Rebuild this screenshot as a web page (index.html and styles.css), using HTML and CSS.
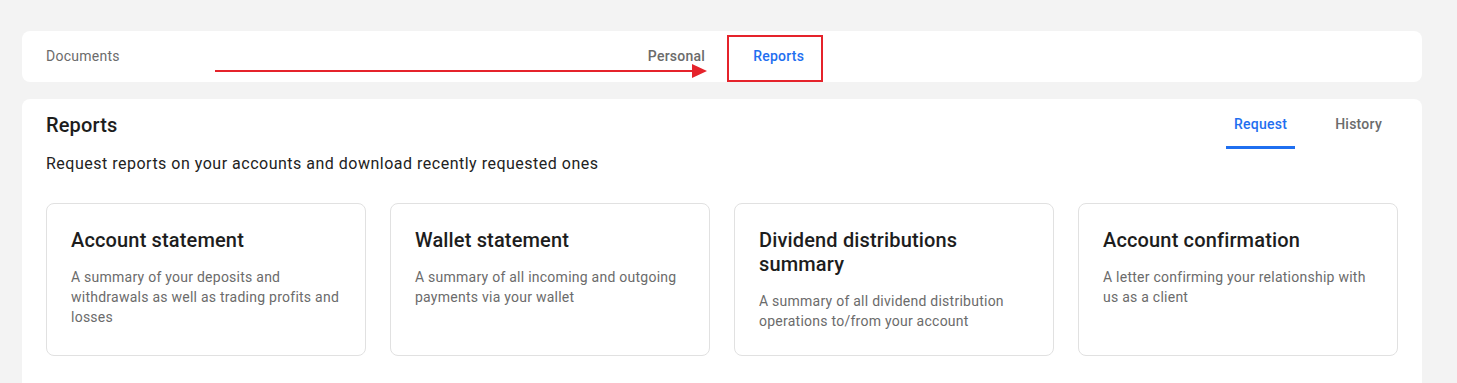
FILE: index.html
```html
<!doctype html>
<html lang="en">
<head>
    <meta charset="UTF-8">
    <meta name="viewport" content="width=device-width, initial-scale=1.0">
    <title>Reports</title>
    <link rel="stylesheet" href="styles.css">
</head>
<body>
    <div class="page">
        <div class="topbar">
            <div class="topbar-title">Documents</div>
            <div class="topbar-tabs">
                <a class="topbar-tab" href="#">Personal</a>
                <a class="topbar-tab active" href="#">Reports
                    <span class="mark-box"></span>
                </a>
            </div>
            <div></div>
            <svg class="mark-arrow" width="500" height="16" viewBox="0 0 500 16">
                <line x1="0" y1="7" x2="478" y2="7" stroke="#e5232b" stroke-width="2"/>
                <polygon points="477,0 492,7 477,14" fill="#e5232b"/>
            </svg>
        </div>

        <div class="panel">
            <div class="panel-head">
                <h1 class="panel-title">Reports</h1>
                <div class="panel-tabs">
                    <a class="panel-tab active" href="#">Request</a>
                    <a class="panel-tab" href="#">History</a>
                </div>
            </div>
            <p class="panel-desc">Request reports on your accounts and download recently requested ones</p>

            <div class="report-list">
                <div class="report-card">
                    <h2>Account statement</h2>
                    <p>A summary of your deposits and withdrawals as well as trading profits and losses</p>
                </div>
                <div class="report-card">
                    <h2>Wallet statement</h2>
                    <p>A summary of all incoming and outgoing payments via your wallet</p>
                </div>
                <div class="report-card">
                    <h2>Dividend distributions summary</h2>
                    <p>A summary of all dividend distribution operations to/from your account</p>
                </div>
                <div class="report-card">
                    <h2>Account confirmation</h2>
                    <p>A letter confirming your relationship with us as a client</p>
                </div>
            </div>
        </div>
    </div>
</body>
</html>
```

FILE: styles.css
```css
*{
    padding: 0;
    margin: 0;
    box-sizing: border-box;
}
body{
    background: #f3f3f3;
    font-family: Roboto, "Liberation Sans", Arial, sans-serif;
    color: #1d1d1d;
}
a{
    text-decoration: none;
}
.page{
    width: 1400px;
    margin-left: 22px;
    padding-top: 31px;
}

/* top bar */
.topbar{
    position: relative;
    height: 51px;
    background: #fff;
    border-radius: 8px;
    display: grid;
    grid-template-columns: 1fr auto 1fr;
    align-items: center;
    padding: 0 16px 0 24px;
}
.topbar-title{
    font-size: 14px;
    letter-spacing: 0.25px;
    color: #6b6b6b;
    padding-bottom: 1px;
}
.topbar-tabs{
    display: flex;
    gap: 32px;
    height: 51px;
}
.topbar-tab{
    position: relative;
    display: flex;
    align-items: center;
    padding: 0 8px;
    font-size: 14px;
    font-weight: 500;
    letter-spacing: 0.25px;
    color: #6b6b6b;
    border-bottom: 2px solid transparent;
}
.topbar-tab.active{
    color: #1f6ff0;
    border-bottom-color: #1f6ff0;
}
.mark-box{
    position: absolute;
    left: -18px;
    right: -11px;
    top: 4px;
    bottom: -2px;
    border: 2px solid #e5232b;
}
.mark-arrow{
    position: absolute;
    left: 193px;
    top: 33px;
}

/* panel */
.panel{
    margin-top: 17px;
    background: #fff;
    border-radius: 8px;
    padding: 0 24px 40px;
}
.panel-head{
    display: flex;
    justify-content: space-between;
    align-items: center;
}
.panel-title{
    font-size: 20px;
    line-height: 24px;
    font-weight: 500;
    letter-spacing: 0.15px;
    padding-top: 2px;
}
.panel-tabs{
    display: flex;
    gap: 32px;
    margin-right: 8px;
}
.panel-tab{
    padding: 16px 8px 13px;
    font-size: 14px;
    line-height: 18px;
    font-weight: 500;
    letter-spacing: 0.25px;
    color: #6b6b6b;
    border-bottom: 3px solid transparent;
}
.panel-tab.active{
    color: #1f6ff0;
    border-bottom-color: #1f6ff0;
}
.panel-desc{
    margin-top: 3px;
    font-size: 16px;
    line-height: 24px;
    letter-spacing: 0.5px;
    color: #222;
}

.report-list{
    margin-top: 27px;
    display: grid;
    grid-template-columns: repeat(4, 1fr);
    gap: 24px;
}
.report-card{
    min-height: 153px;
    border: 1px solid #e1e1e1;
    border-radius: 8px;
    padding: 24px 24px 20px;
}
.report-card h2{
    font-size: 20px;
    line-height: 24px;
    font-weight: 500;
    letter-spacing: 0.15px;
    color: #1d1d1d;
}
.report-card p{
    margin-top: 15px;
    font-size: 14px;
    line-height: 20px;
    letter-spacing: 0.25px;
    color: #6b6b6b;
}
```
